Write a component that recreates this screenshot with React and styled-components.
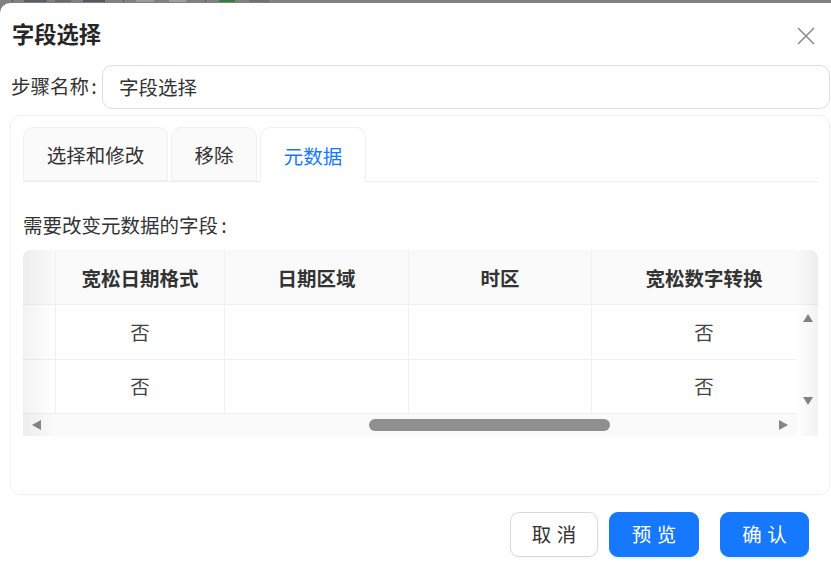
import React from 'react';
import styled, {createGlobalStyle} from 'styled-components';

const GlobalStyle = createGlobalStyle`
  html, body {
    margin: 0;
    padding: 0;
    background: #fff;
    overflow: hidden;
  }
  body {
    font-family: "Noto Sans CJK SC", "Liberation Sans", sans-serif;
    color: #333;
  }
`;

const Page = styled.div`
  width: 831px;
  height: 570px;
  background: #808080;
  overflow: hidden;
`;

const Backdrop = styled.div`
  height: 3px;
  display: flex;
  overflow: hidden;
`;

const BackdropMark = styled.span`
  width: ${p => p.$width}px;
  height: 2px;
  margin-left: ${p => p.$left}px;
  background: ${p => p.$color};
`;

const Modal = styled.div`
  height: 567px;
  background: #fff;
  border-radius: 10px 0 0 0;
  padding: 0 1px 0 10px;
  box-sizing: border-box;
`;

const Header = styled.div`
  height: 62px;
  display: flex;
  align-items: center;
  justify-content: space-between;
  padding: 0 14px 2px 2px;
  box-sizing: border-box;
`;

const Title = styled.h1`
  margin: 0;
  font-size: 22.25px;
  font-weight: 700;
  color: #262626;
`;

const CloseButton = styled.button`
  width: 20px;
  height: 20px;
  margin-top: 6px;
  padding: 0;
  border: 0;
  background: none;
  color: #8c8c8c;
  display: flex;
`;

const NameRow = styled.div`
  display: flex;
  align-items: center;
  height: 44px;
`;

const NameLabel = styled.label`
  width: 92px;
  padding: 0 0 4px 1px;
  box-sizing: border-box;
  font-size: 19.5px;
  word-spacing: -2px;
  white-space: nowrap;
  color: #333;
`;

const NameInput = styled.div`
  flex: 1;
  height: 44px;
  box-sizing: border-box;
  border: 1px solid #dedede;
  border-radius: 10px;
  padding: 0 16px 2px;
  display: flex;
  align-items: center;
  font-size: 19.5px;
  color: #333;
`;

const Panel = styled.div`
  margin-top: 6px;
  height: 380px;
  box-sizing: border-box;
  border: 1px solid #f2f2f2;
  border-radius: 10px;
  padding: 11px 11px 0 12px;
`;

const Tabs = styled.div`
  display: flex;
  gap: 3px;
  height: 55px;
  border-bottom: 1px solid #ececec;
  box-sizing: border-box;
`;

const Tab = styled.div`
  width: ${p => p.$width}px;
  height: ${p => (p.$active ? 55 : 54)}px;
  box-sizing: border-box;
  display: flex;
  align-items: center;
  justify-content: center;
  font-size: 19.5px;
  color: ${p => (p.$active ? '#1677ff' : '#333')};
  background: ${p => (p.$active ? '#fff' : '#fafafa')};
  border: 1px solid #f0f0f0;
  border-bottom: ${p => (p.$active ? '0' : '1px solid #f0f0f0')};
  border-radius: 10px 10px 0 0;
`;

const FieldLabel = styled.div`
  margin-top: 29px;
  height: 28px;
  line-height: 28px;
  font-size: 19.5px;
  word-spacing: -1px;
  color: #333;
`;

const TableWrap = styled.div`
  position: relative;
  margin-top: 11px;
  height: 186px;
  overflow: hidden;
  border-radius: 8px 8px 0 0;
  background: #fff;
`;

const Row = styled.div`
  display: grid;
  grid-template-columns: 33px 169px 184px 183px 224px;
  height: ${p => p.$height}px;
  box-sizing: border-box;
  border-bottom: 1px solid #f0f0f0;
  background: ${p => (p.$head ? '#fafafa' : '#fff')};
`;

const Cell = styled.div`
  display: flex;
  align-items: center;
  justify-content: center;
  padding-bottom: ${p => (p.$head ? 0 : 2)}px;
  border-right: 1px solid #f0f0f0;
  font-size: 19.5px;
  font-weight: ${p => (p.$head ? 700 : 400)};
  color: ${p => (p.$head ? '#333' : '#444')};
  &:last-child {
    border-right: 0;
  }
`;

const ScrollX = styled.div`
  height: 22px;
  background: #fafafa;
  display: flex;
  align-items: center;
  justify-content: space-between;
  padding: 0 29px 0 8px;
  position: relative;
`;

const Thumb = styled.div`
  position: absolute;
  left: 346px;
  top: 5px;
  width: 241px;
  height: 12px;
  border-radius: 6px;
  background: #8f8f8f;
`;

const ScrollY = styled.div`
  position: absolute;
  right: 0;
  top: 55px;
  bottom: 0;
  width: 21px;
  background: #fff;
  display: flex;
  flex-direction: column;
  justify-content: space-between;
  align-items: center;
  padding: 8px 0 30px;
  box-sizing: border-box;
`;

const LeftFade = styled.div`
  position: absolute;
  left: 0;
  top: 0;
  bottom: 0;
  width: 32px;
  background: linear-gradient(to right, rgba(0, 0, 0, 0.05), rgba(0, 0, 0, 0));
  pointer-events: none;
`;

const RightFade = styled(LeftFade)`
  left: auto;
  right: 0;
  width: 22px;
  background: linear-gradient(to left, rgba(0, 0, 0, 0.05), rgba(0, 0, 0, 0));
`;

const Arrow = styled.svg`
  width: 10px;
  height: 10px;
  flex: none;
  fill: #868686;
  display: block;
`;

const Footer = styled.div`
  margin-top: 17px;
  padding-right: 21px;
  display: flex;
  justify-content: flex-end;
`;

const Button = styled.button`
  width: ${p => p.$width}px;
  height: 45px;
  margin-left: ${p => p.$gap}px;
  box-sizing: border-box;
  border-radius: 9px;
  font-family: inherit;
  font-size: 19.5px;
  letter-spacing: 5.5px;
  text-indent: 5.5px;
  padding: 0 0 2px;
  cursor: pointer;
  color: ${p => (p.$primary ? '#fff' : '#333')};
  background: ${p => (p.$primary ? '#1677ff' : '#fff')};
  border: 1px solid ${p => (p.$primary ? '#1677ff' : '#d9d9d9')};
  box-shadow: 0 2px 0 ${p => (p.$primary ? 'rgba(5, 145, 255, 0.1)' : 'rgba(0, 0, 0, 0.02)')};
`;

const columns = ['宽松日期格式', '日期区域', '时区', '宽松数字转换'];
const rows = [['否', '', '', '否'], ['否', '', '', '否']];

// bits of the page behind the dialog, only the top edge shows
const marks = [
  {left: 12, width: 1, color: '#3d5f86'},
  {left: 11, width: 23, color: '#5a5f66'},
  {left: 8, width: 16, color: '#66696d'},
  {left: 12, width: 22, color: '#565a60'},
  {left: 18, width: 1, color: '#3d5f86'},
  {left: 12, width: 18, color: '#9a9a9a'},
  {left: 15, width: 17, color: '#a0a0a0'},
  {left: 19, width: 1, color: '#3d5f86'},
  {left: 13, width: 16, color: '#3c7a42'},
  {left: 14, width: 20, color: '#707070'},
];

export default function App() {
  return (
    <Page>
      <GlobalStyle />
      <Backdrop>
        {marks.map((m, i) => <BackdropMark key={i} $left={m.left} $width={m.width} $color={m.color} />)}
      </Backdrop>
      <Modal>
        <Header>
          <Title>字段选择</Title>
          <CloseButton aria-label="close">
            <svg width="20" height="20" viewBox="0 0 20 20" fill="none" stroke="currentColor" strokeWidth="1.6">
              <path d="M2 2L18 18M18 2L2 18" />
            </svg>
          </CloseButton>
        </Header>
        <NameRow>
          <NameLabel>步骤名称 :</NameLabel>
          <NameInput>字段选择</NameInput>
        </NameRow>
        <Panel>
          <Tabs>
            <Tab $width={145}>选择和修改</Tab>
            <Tab $width={86}>移除</Tab>
            <Tab $width={106} $active>元数据</Tab>
          </Tabs>
          <FieldLabel>需要改变元数据的字段 :</FieldLabel>
          <TableWrap>
            <Row $head $height={55}>
              <Cell $head />
              {columns.map(c => <Cell $head key={c}>{c}</Cell>)}
            </Row>
            {rows.map((r, i) => (
              <Row key={i} $height={i === 0 ? 55 : 54}>
                <Cell />
                {r.map((v, j) => <Cell key={j}>{v}</Cell>)}
              </Row>
            ))}
            <ScrollX>
              <Arrow viewBox="0 0 10 10"><path d="M10 0V10L1 5Z" /></Arrow>
              <Thumb />
              <Arrow viewBox="0 0 10 10"><path d="M0 0V10L9 5Z" /></Arrow>
            </ScrollX>
            <ScrollY>
              <Arrow viewBox="0 0 10 10"><path d="M0 9H10L5 1Z" /></Arrow>
              <Arrow viewBox="0 0 10 10"><path d="M0 1H10L5 9Z" /></Arrow>
            </ScrollY>
            <LeftFade />
            <RightFade />
          </TableWrap>
        </Panel>
        <Footer>
          <Button $width={88}>取消</Button>
          <Button $width={90} $gap={11} $primary>预览</Button>
          <Button $width={89} $gap={21} $primary>确认</Button>
        </Footer>
      </Modal>
    </Page>
  );
}
